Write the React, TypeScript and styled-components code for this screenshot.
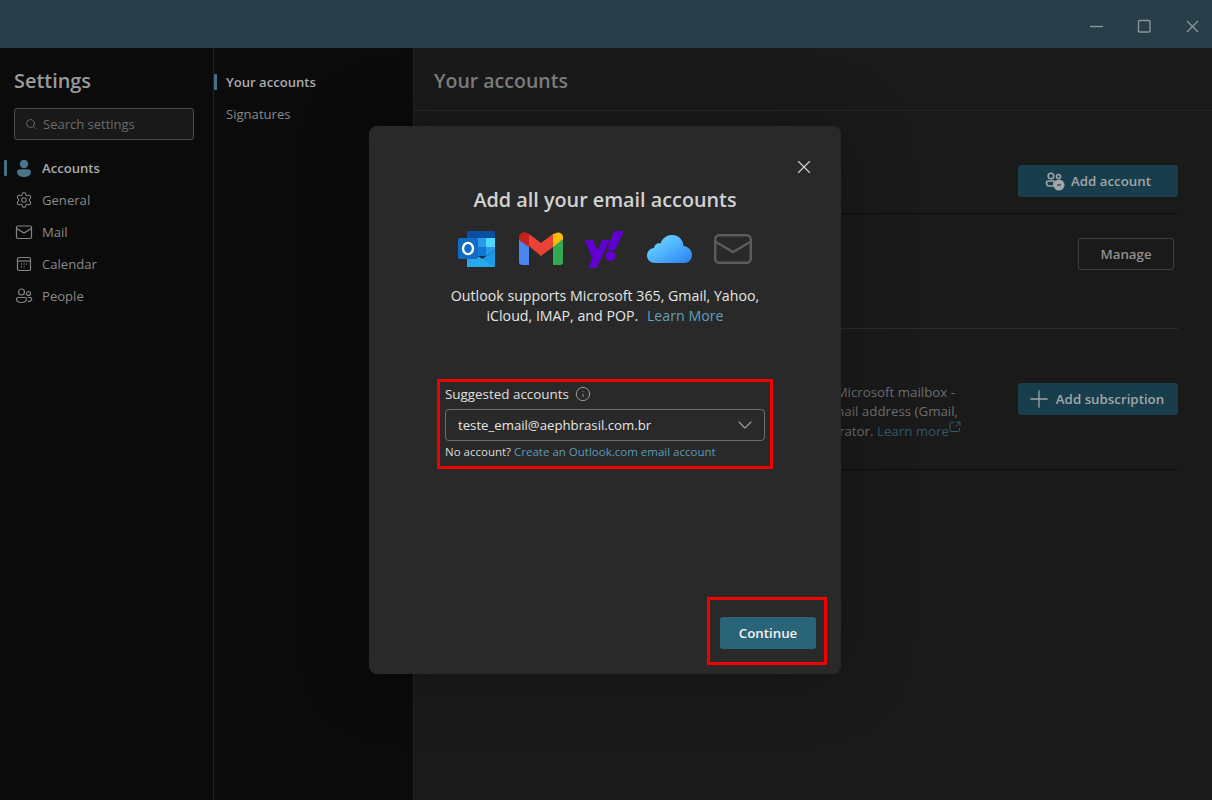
import styled, { createGlobalStyle } from "styled-components";
import { ChevronDown, Info, Plus, Search, Settings as Gear, X } from "lucide-react";

const GlobalStyle = createGlobalStyle`
  html, body {
    margin: 0;
    padding: 0;
    background: #0b0b0b;
  }
  * {
    box-sizing: border-box;
  }
`;

const Page = styled.div`
  position: relative;
  width: 1212px;
  height: 800px;
  overflow: hidden;
  display: flex;
  flex-direction: column;
  font-family: "Open Sans", "Noto Sans", sans-serif;
  background: #0b0b0b;
`;

const TitleBar = styled.header`
  height: 48px;
  flex: none;
  background: #283f4a;
  display: flex;
  align-items: center;
  justify-content: flex-end;
  padding: 4px 10px 0 0;
  gap: 29px;
  color: #8a959a;
`;

const WindowButton = styled.svg`
  width: 19px;
  height: 19px;
  fill: none;
  stroke: currentColor;
  stroke-width: 1.4;
`;

const Body = styled.div`
  flex: 1;
  display: flex;
  min-height: 0;
`;

const Sidebar = styled.nav`
  width: 214px;
  flex: none;
  border-right: 1px solid #232323;
  padding: 19px 0 0;
`;

const SidebarTitle = styled.h1`
  margin: 0 0 13px 14px;
  font-size: 19.9px;
  line-height: 28px;
  font-weight: 600;
  color: #9a9a9a;
`;

const SearchBox = styled.div`
  width: 180px;
  height: 32px;
  margin: 0 0 12px 14px;
  padding: 0 10px;
  display: flex;
  align-items: center;
  gap: 6px;
  background: #191919;
  border: 1px solid #4a4a4a;
  border-radius: 3px;
  font-size: 13px;
  color: #6b6b6b;
`;

const NavItem = styled.div<{ $active?: boolean }>`
  position: relative;
  height: 32px;
  display: flex;
  align-items: center;
  gap: 9px;
  padding: 0 0 0 15px;
  font-size: 13.1px;
  font-weight: ${(p) => (p.$active ? 600 : 400)};
  color: ${(p) => (p.$active ? "#ababab" : "#8a8a8a")};

  svg {
    flex: none;
  }

  &::before {
    content: "";
    display: ${(p) => (p.$active ? "block" : "none")};
    position: absolute;
    left: 4px;
    top: 8px;
    width: 3px;
    height: 16px;
    background: #477088;
    border-radius: 1px;
  }
`;

const NavIcon = styled.svg`
  width: 18px;
  height: 18px;
  fill: none;
  stroke: #858585;
  stroke-width: 1.2;
`;

const SubNav = styled.nav`
  width: 200px;
  flex: none;
  border-right: 1px solid #232323;
  padding: 18px 0 0;
`;

const SubNavItem = styled(NavItem)`
  padding-left: 12px;
  &::before {
    left: 0;
  }
`;

const Main = styled.main`
  flex: 1;
  background: #1a1a1a;
  min-width: 0;
`;

const MainHeader = styled.div`
  height: 63px;
  padding: 19px 0 0 20px;
  border-bottom: 1px solid #242424;
  font-size: 19.5px;
  line-height: 28px;
  font-weight: 600;
  color: #7f7f7f;
`;

const Rows = styled.div`
  padding: 0 34px 0 20px;
`;

const Row = styled.div<{ $height: number; $top: number; $light?: boolean; $inset?: number }>`
  height: ${(p) => p.$height}px;
  padding: ${(p) => p.$top}px ${(p) => p.$inset ?? 0}px 0 0;
  display: flex;
  justify-content: flex-end;
  align-items: flex-start;
  gap: 57px;
  border-bottom: 1px solid ${(p) => (p.$light ? "#2b2b2b" : "#0e0e0e")};
`;

const PrimaryDim = styled.div`
  width: 160px;
  height: 32px;
  display: flex;
  align-items: center;
  justify-content: center;
  gap: 6px;
  background: #183e4b;
  border-radius: 3px;
  font-size: 13.3px;
  font-weight: 600;
  color: #a0a6a9;
`;

const PlusIcon = styled(Plus)`
  margin: 0 -3px 0 -7px;
`;

const OutlineDim = styled.div`
  width: 96px;
  height: 32px;
  display: flex;
  align-items: center;
  justify-content: center;
  border: 1px solid #3f3f3f;
  border-radius: 3px;
  font-size: 13.3px;
  font-weight: 600;
  color: #8f8f8f;
`;

const RowText = styled.div`
  font-size: 13.3px;
  line-height: 19px;
  color: #6e6e6e;
  text-align: right;
  white-space: nowrap;
`;

const RowLine = styled.div<{ $pad: number }>`
  padding-right: ${(p) => p.$pad}px;
`;

const DimLink = styled.span`
  color: #34596b;
`;

const Modal = styled.section`
  position: absolute;
  left: 369px;
  top: 126px;
  width: 472px;
  height: 548px;
  display: flex;
  flex-direction: column;
  align-items: center;
  padding: 60px 14px 9px 68px;
  background: #292929;
  border-radius: 8px;
  box-shadow: 0 0 70px rgba(0, 0, 0, 0.28);
`;

const CloseButton = styled.div`
  position: absolute;
  top: 30px;
  right: 26px;
  display: flex;
  color: #d6d6d6;
`;

const ModalColumn = styled.div`
  width: 472px;
  margin-left: -68px;
  margin-right: -14px;
  display: flex;
  flex-direction: column;
  align-items: center;
`;

const ModalTitle = styled.h2`
  margin: 0;
  font-size: 19.8px;
  line-height: 28px;
  font-weight: 600;
  color: #d2d2d2;
`;

const Logos = styled.div`
  height: 40px;
  margin-top: 15px;
  padding-right: 1px;
  display: flex;
  align-items: center;
  gap: 22px;
`;

const Blurb = styled.p`
  margin: 17px 0 0;
  text-align: center;
  font-size: 14.2px;
  line-height: 20px;
  color: #e6e6e6;
`;

const BlurbLink = styled.a`
  margin-left: 5px;
  color: #61a0bd;
`;

const Highlight = styled.div`
  border: 3px solid #f00000;
`;

const AccountBox = styled(Highlight)`
  width: 336px;
  height: 90px;
  margin-top: 53px;
  padding: 3px 5px 0;
`;

const FieldLabel = styled.div`
  display: flex;
  align-items: center;
  gap: 6px;
  height: 18px;
  font-size: 13.4px;
  color: #e0e0e0;
  svg {
    color: #b5b5b5;
  }
`;

const Select = styled.div`
  height: 32px;
  margin-top: 6px;
  padding: 0 7px 0 12px;
  display: flex;
  align-items: center;
  justify-content: space-between;
  border: 1px solid #6e6e6e;
  border-radius: 4px;
  font-size: 13.2px;
  color: #e6e6e6;
  svg {
    color: #a0a0a0;
  }
`;

const NoAccount = styled.div`
  margin-top: 3px;
  font-size: 11.5px;
  line-height: 16px;
  color: #dcdcdc;
`;

const SmallLink = styled.a`
  color: #5c9ab6;
`;

const Footer = styled.div`
  margin-top: auto;
  align-self: flex-end;
`;

const ContinueBox = styled(Highlight)`
  width: 120px;
  height: 68px;
  padding: 17px 8px 0 10px;
`;

const ContinueButton = styled.div`
  height: 32px;
  display: flex;
  align-items: center;
  justify-content: center;
  background: #2a6479;
  border-radius: 3px;
  font-size: 13.3px;
  font-weight: 600;
  color: #f4f4f4;
`;

const OutlookLogo = () => (
  <svg width="40" height="38" viewBox="0 0 40 38">
    <path d="M11 1h26a1 1 0 0 1 1 1v6H10V2a1 1 0 0 1 1-1z" fill="#0a4fa3" />
    <rect x="10" y="8" width="10" height="9" fill="#0a6ac4" />
    <rect x="20" y="8" width="9" height="9" fill="#2a9ae8" />
    <rect x="29" y="8" width="9" height="9" fill="#50d9ff" />
    <rect x="10" y="17" width="10" height="9" fill="#0a6ac4" />
    <rect x="20" y="17" width="9" height="9" fill="#0f78d4" />
    <rect x="29" y="17" width="9" height="9" fill="#2a9ae8" />
    <path d="M10 20l14 9 14-9v5L24 31l-14-8z" fill="#0a4a90" />
    <path d="M10 20v16a1 1 0 0 0 1 1h26a1 1 0 0 0 1-1V20L24 30z" fill="#1a9be6" />
    <path d="M10 37l28-0.2L24 28 10 20z" fill="#28a8ea" />
    <rect x="1" y="8" width="20" height="21" rx="2" fill="#0f6cc4" />
    <ellipse cx="11" cy="18.5" rx="5" ry="5.6" fill="none" stroke="#fff" strokeWidth="2.4" />
  </svg>
);

const GmailLogo = () => (
  <svg width="44" height="34" viewBox="0 0 44 34">
    <path d="M3 33h7V14L0 6v24a3 3 0 0 0 3 3z" fill="#4a86f0" />
    <path d="M34 33h7a3 3 0 0 0 3-3V6l-10 8z" fill="#34a853" />
    <path d="M34 2v13l10-8V5c0-4-5-6-8-3.500z" fill="#fbbc04" />
    <path d="M10 14V2l12 9 12-9v13L22 24z" fill="#ea4335" />
    <path d="M0 5v3l10 7V2L8 .8C5-.9 0 1 0 5z" fill="#c5221f" />
  </svg>
);

const YahooLogo = () => (
  <svg width="40" height="37" viewBox="0 0 40 37">
    <path d="M0 9h8.500l4.200 11 4.300-11H25L11.500 37H3.500l3.800-9z" fill="#6001d2" />
    <circle cx="25.500" cy="25" r="5" fill="#6001d2" />
    <path d="M29 0h10l-9 19h-8z" fill="#6001d2" />
  </svg>
);

const CloudLogo = () => (
  <svg width="45" height="28" viewBox="0 0 45 28">
    <defs>
      <linearGradient id="cloud" x1="0" y1="0" x2="1" y2="1">
        <stop offset="0" stopColor="#7fdcff" />
        <stop offset="0.5" stopColor="#4db4ff" />
        <stop offset="1" stopColor="#2f7df0" />
      </linearGradient>
    </defs>
    <path
      d="M8 28C3 28 0 24.500 0 20.500S3 13.500 7 13c.5-3.500 3.500-5.500 6.500-4.500C15.500 3 20 0 25 0c6.500 0 11 4.500 11.500 11C41.500 11.500 45 15.500 45 20s-3.500 8-8 8z"
      fill="url(#cloud)"
    />
  </svg>
);

const PlainMailLogo = () => (
  <svg width="38" height="30" viewBox="0 0 38 30" fill="none" stroke="#5c5c5c" strokeWidth="2.4">
    <rect x="1.200" y="1.200" width="35.600" height="27.600" rx="4" />
    <path d="M2 8l17 10 17-10" />
  </svg>
);

const PersonFilled = () => (
  <svg width="18" height="18" viewBox="0 0 18 18" fill="#4a7289">
    <circle cx="9" cy="5" r="4.200" />
    <path d="M2 13c0-2 1.500-2.800 3-2.800h8c1.500 0 3 .8 3 2.800 0 3-3 5-7 5s-7-2-7-5z" />
  </svg>
);

const MailIcon = () => (
  <NavIcon viewBox="0 0 18 18">
    <rect x="1.500" y="3" width="15" height="12.500" rx="1.500" />
    <path d="M1.700 5.500L9 10l7.300-4.500" />
  </NavIcon>
);

const CalendarIcon = () => (
  <NavIcon viewBox="0 0 18 18">
    <rect x="2.500" y="2.500" width="13" height="13" rx="1.500" />
    <path d="M2.500 6h13" />
    <path d="M6 9h1M8.600 9h1M11.200 9h1M6 11.800h1M8.600 11.800h1" strokeWidth="1.300" />
  </NavIcon>
);

const PeopleIcon = () => (
  <NavIcon viewBox="0 0 18 18">
    <circle cx="6.500" cy="5" r="3" />
    <circle cx="13.500" cy="6.500" r="2" />
    <path d="M1.500 12c0-1 .8-1.500 1.700-1.500h6.600c.9 0 1.700.5 1.700 1.500 0 2-2 3.500-5 3.500s-5-1.500-5-3.500z" />
    <path d="M13 10.500h2c1 0 1.700.6 1.700 1.500 0 1.500-1.500 2.500-4 2.500" />
  </NavIcon>
);

const AddPeopleIcon = () => (
  <svg width="20" height="20" viewBox="0 0 20 20" fill="none" stroke="#a0a6a9" strokeWidth="1.600">
    <circle cx="6" cy="5" r="2.800" />
    <circle cx="13.500" cy="5.500" r="2" />
    <path d="M1.500 11.500c0-1 .8-1.500 1.700-1.500h5.800v5H4c-1.500 0-2.500-1.700-2.500-3.500z" />
    <circle cx="14" cy="14" r="5.500" fill="#a0a6a9" stroke="none" />
    <path d="M12 14h4" stroke="#183e4b" strokeWidth="1.200" />
  </svg>
);

const ExternalIcon = () => (
  <svg width="12" height="12" viewBox="0 0 12 12" fill="none" stroke="#34596b" strokeWidth="1" style={{ verticalAlign: 3 }}>
    <path d="M5 1.500H2a1 1 0 0 0-1 1v7a1 1 0 0 0 1 1h7.500a1 1 0 0 0 1-1V7M7 1h4v4M11 1L6.500 5.500" />
  </svg>
);

const App = () => {
  return (
    <Page>
      <GlobalStyle />
      <TitleBar>
        <WindowButton viewBox="0 0 19 19">
          <path d="M3 9.500h13" />
        </WindowButton>
        <WindowButton viewBox="0 0 19 19">
          <rect x="3.500" y="3.500" width="11.500" height="11.500" rx="1" />
        </WindowButton>
        <WindowButton viewBox="0 0 19 19">
          <path d="M4 4l11 11M15 4L4 15" />
        </WindowButton>
      </TitleBar>
      <Body>
        <Sidebar>
          <SidebarTitle>Settings</SidebarTitle>
          <SearchBox>
            <Search size={12} strokeWidth={1.5} color="#7a7a7a" />
            Search settings
          </SearchBox>
          <NavItem $active>
            <PersonFilled />
            Accounts
          </NavItem>
          <NavItem>
            <Gear size={18} strokeWidth={1.4} color="#858585" />
            General
          </NavItem>
          <NavItem>
            <MailIcon />
            Mail
          </NavItem>
          <NavItem>
            <CalendarIcon />
            Calendar
          </NavItem>
          <NavItem>
            <PeopleIcon />
            People
          </NavItem>
        </Sidebar>
        <SubNav>
          <SubNavItem $active>Your accounts</SubNavItem>
          <SubNavItem>Signatures</SubNavItem>
        </SubNav>
        <Main>
          <MainHeader>Your accounts</MainHeader>
          <Rows>
            <Row $height={103} $top={54}>
              <PrimaryDim>
                <AddPeopleIcon />
                Add account
              </PrimaryDim>
            </Row>
            <Row $height={115} $top={24} $inset={4} $light>
              <OutlineDim>Manage</OutlineDim>
            </Row>
            <Row $height={141} $top={54}>
              <RowText>
                <RowLine $pad={6}>Microsoft mailbox -</RowLine>
                <RowLine $pad={3}>email address (Gmail,</RowLine>
                <RowLine $pad={0}>
                  administrator. <DimLink>Learn more</DimLink>
                  <ExternalIcon />
                </RowLine>
              </RowText>
              <PrimaryDim>
                <PlusIcon size={28} strokeWidth={1.100} />
                Add subscription
              </PrimaryDim>
            </Row>
          </Rows>
        </Main>
      </Body>
      <Modal>
        <CloseButton>
          <X size={22} strokeWidth={1.200} />
        </CloseButton>
        <ModalColumn>
          <ModalTitle>Add all your email accounts</ModalTitle>
          <Logos>
            <OutlookLogo />
            <GmailLogo />
            <YahooLogo />
            <CloudLogo />
            <PlainMailLogo />
          </Logos>
          <Blurb>
            Outlook supports Microsoft 365, Gmail, Yahoo,
            <br />
            iCloud, IMAP, and POP. <BlurbLink>Learn More</BlurbLink>
          </Blurb>
          <AccountBox>
            <FieldLabel>
              Suggested accounts
              <Info size={16} strokeWidth={1.200} />
            </FieldLabel>
            <Select>
              teste_email@aephbrasil.com.br
              <ChevronDown size={24} strokeWidth={1.100} />
            </Select>
            <NoAccount>
              No account? <SmallLink>Create an Outlook.com email account</SmallLink>
            </NoAccount>
          </AccountBox>
        </ModalColumn>
        <Footer>
          <ContinueBox>
            <ContinueButton>Continue</ContinueButton>
          </ContinueBox>
        </Footer>
      </Modal>
    </Page>
  );
};

export default App;
